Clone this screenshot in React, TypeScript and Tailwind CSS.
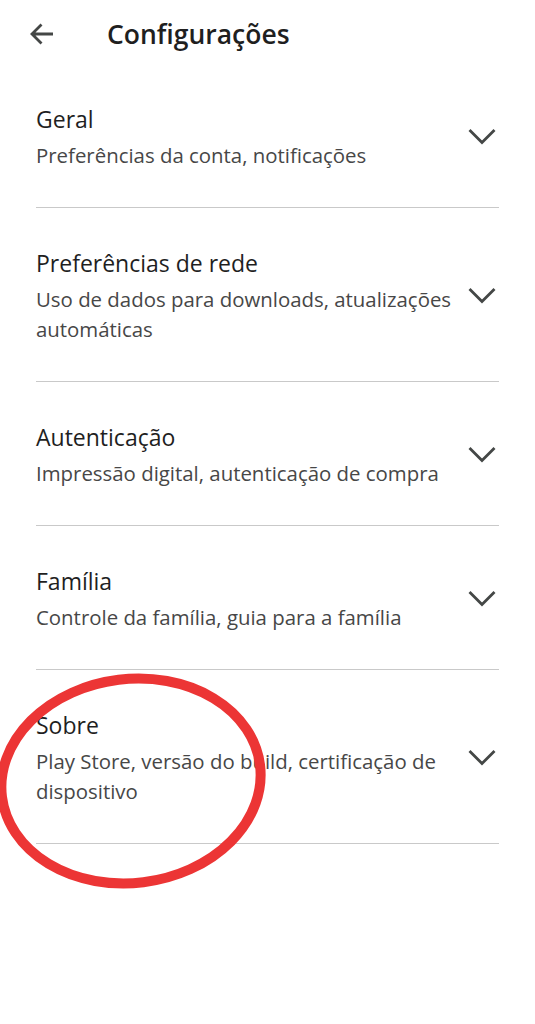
import React from "react";

const items = [
  { title: "Geral", sub: "Preferências da conta, notificações" },
  { title: "Preferências de rede", sub: "Uso de dados para downloads, atualizações automáticas" },
  { title: "Autenticação", sub: "Impressão digital, autenticação de compra" },
  { title: "Família", sub: "Controle da família, guia para a família" },
  { title: "Sobre", sub: "Play Store, versão do build, certificação de dispositivo" },
];

function Chevron() {
  return (
    <svg width="28" height="18" viewBox="0 0 28 18" className="shrink-0">
      <polyline points="2.5,3 14,14.5 25.5,3" fill="none" stroke="#444746" strokeWidth="2.8" strokeLinecap="square" strokeLinejoin="miter" />
    </svg>
  );
}

export default function App() {
  return (
    <div className="relative w-[535px] h-[1024px] bg-white overflow-hidden" style={{ fontFamily: "'Open Sans', 'Noto Sans', sans-serif" }}>
      <div className="h-[68px] flex items-center">
        <div className="w-[107px] flex items-center pl-[29px]">
          <svg width="26" height="24" viewBox="0 0 26 24">
            <path d="M24 12H3.5M12.5 2.5L3 12l9.5 9.5" fill="none" stroke="#444746" strokeWidth="2.8" strokeLinecap="butt" strokeLinejoin="miter" />
          </svg>
        </div>
        <div className="text-[26.5px] leading-[34px] font-semibold text-[#1f1f1f]">Configurações</div>
      </div>
      <div className="px-[36px]">
        {items.map((it, i) => (
          <div key={i} className={`flex items-center border-b border-[#c9c9c9] ${i === 0 ? "pt-[36px]" : "pt-[40px]"} pb-[37px]`}>
            <div className="flex-1 pr-[8px]">
              <div className="text-[23px] leading-[30px] text-[#1f1f1f]">{it.title}</div>
              <div className="mt-[6px] text-[20.4px] leading-[30px] text-[#474747]">{it.sub}</div>
            </div>
            <div className="mr-[3px] pl-[4px]">
              <Chevron />
            </div>
          </div>
        ))}
      </div>
      <svg className="absolute left-0 top-0 pointer-events-none" width="535" height="1024">
        <ellipse cx="131" cy="781" rx="130" ry="102" transform="rotate(-7 131 781)" fill="none" stroke="#ec3535" strokeWidth="10" />
      </svg>
    </div>
  );
}
